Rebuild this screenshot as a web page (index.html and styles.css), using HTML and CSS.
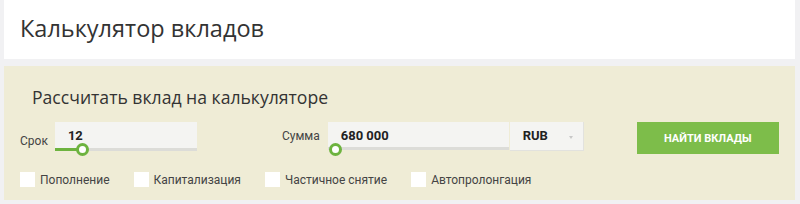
FILE: index.html
```html
<!DOCTYPE html>
<html lang="ru">
  <head>
    <meta charset="UTF-8" />
    <title>Калькулятор вкладов</title>
    <link rel="stylesheet" href="styles.css">
  </head>
  <body>
    <div class="page">
      <div class="header-card">
        <h1>Калькулятор вкладов</h1>
      </div>

      <div class="calc">
        <h2>Рассчитать вклад на калькуляторе</h2>

        <div class="calc-row">
          <div class="field field-term">
            <label>Срок</label>
            <div class="input-wrap">
              <div class="input">12</div>
              <div class="slider">
                <div class="slider-fill" style="width: 27px"></div>
                <div class="slider-thumb" style="left: 27px"></div>
              </div>
            </div>
          </div>

          <div class="field field-sum">
            <label>Сумма</label>
            <div class="input-wrap">
              <div class="input input-sum">680 000</div>
              <div class="slider">
                <div class="slider-thumb" style="left: 7px"></div>
              </div>
            </div>
            <div class="currency">RUB <span class="arrow"></span></div>
          </div>

          <button class="btn">Найти вклады</button>
        </div>

        <div class="options">
          <div class="check"><span class="box"></span>Пополнение</div>
          <div class="check"><span class="box"></span>Капитализация</div>
          <div class="check"><span class="box"></span>Частичное снятие</div>
          <div class="check"><span class="box"></span>Автопролонгация</div>
        </div>
      </div>
    </div>
  </body>
</html>
```

FILE: styles.css
```css
body {
  margin: 0;
  background: #f1f1f3;
  font-family: Roboto, 'Open Sans', sans-serif;
  color: #333;
}

.page {
  padding: 0 5px 0 4px;
}

.header-card {
  background: white;
  height: 59px;
  padding-left: 16px;
  box-sizing: border-box;
}

.header-card h1 {
  margin: 0;
  padding-top: 13px;
  font-family: 'Open Sans', sans-serif;
  font-size: 23.5px;
  font-weight: 400;
  color: #333;
  line-height: 30px;
}

.calc {
  margin-top: 7px;
  background: #efecd6;
  height: 134px;
  padding: 18px 0 0 16px;
  box-sizing: border-box;
}

.calc h2 {
  margin: 0 0 0 12px;
  font-family: 'Open Sans', sans-serif;
  font-size: 17.6px;
  font-weight: 400;
  color: #333;
  line-height: 26px;
}

.calc-row {
  display: flex;
  align-items: flex-start;
  margin-top: 12px;
  height: 34px;
}

.field {
  display: flex;
  align-items: flex-start;
}

.field label {
  font-size: 12px;
  color: #444;
  padding-top: 12px;
  margin-right: 7px;
}

.field-sum {
  margin-left: 85px;
}

.field-sum label {
  padding-top: 7px;
  margin-right: 8px;
}

.input-wrap {
  position: relative;
}

.input {
  width: 142px;
  height: 29px;
  box-sizing: border-box;
  background: #f4f4f2;
  border-bottom: 3px solid #dcdcd8;
  padding: 6px 13px;
  font-size: 13px;
  font-weight: 700;
  color: #222;
}

.input-sum {
  width: 181px;
  padding-left: 13px;
  height: 28px;
}

.slider {
  position: absolute;
  left: 0;
  top: 26px;
  width: 100%;
  height: 3px;
}

.slider-fill {
  height: 3px;
  background: #6db33f;
}

.slider-thumb {
  position: absolute;
  top: -5px;
  width: 13px;
  height: 13px;
  box-sizing: border-box;
  margin-left: -6px;
  border: 3px solid #6db33f;
  border-radius: 50%;
  background: white;
}

.currency {
  width: 74px;
  height: 29px;
  box-sizing: border-box;
  margin-left: 1px;
  background: #f4f4f2;
  border-bottom: 1px solid #e2e2de;
  border-right: 1px solid #e2e2de;
  padding: 6px 13px;
  font-size: 13px;
  font-weight: 700;
  color: #222;
  position: relative;
}

.arrow {
  position: absolute;
  right: 10px;
  top: 14px;
  border-left: 2px solid transparent;
  border-right: 2px solid transparent;
  border-top: 3px solid #c8c8c8;
}

.btn {
  margin-left: 53px;
  width: 142px;
  height: 32px;
  border: none;
  background: #7dbd4a;
  color: white;
  font-family: Roboto, sans-serif;
  font-size: 11px;
  font-weight: 700;
  text-transform: uppercase;
  cursor: pointer;
}

.options {
  display: flex;
  margin-top: 16px;
}

.check {
  display: flex;
  align-items: center;
  font-size: 12px;
  color: #444;
  margin-right: 24px;
}

.box {
  display: inline-block;
  width: 15px;
  height: 15px;
  background: white;
  margin-right: 5px;
}
```
